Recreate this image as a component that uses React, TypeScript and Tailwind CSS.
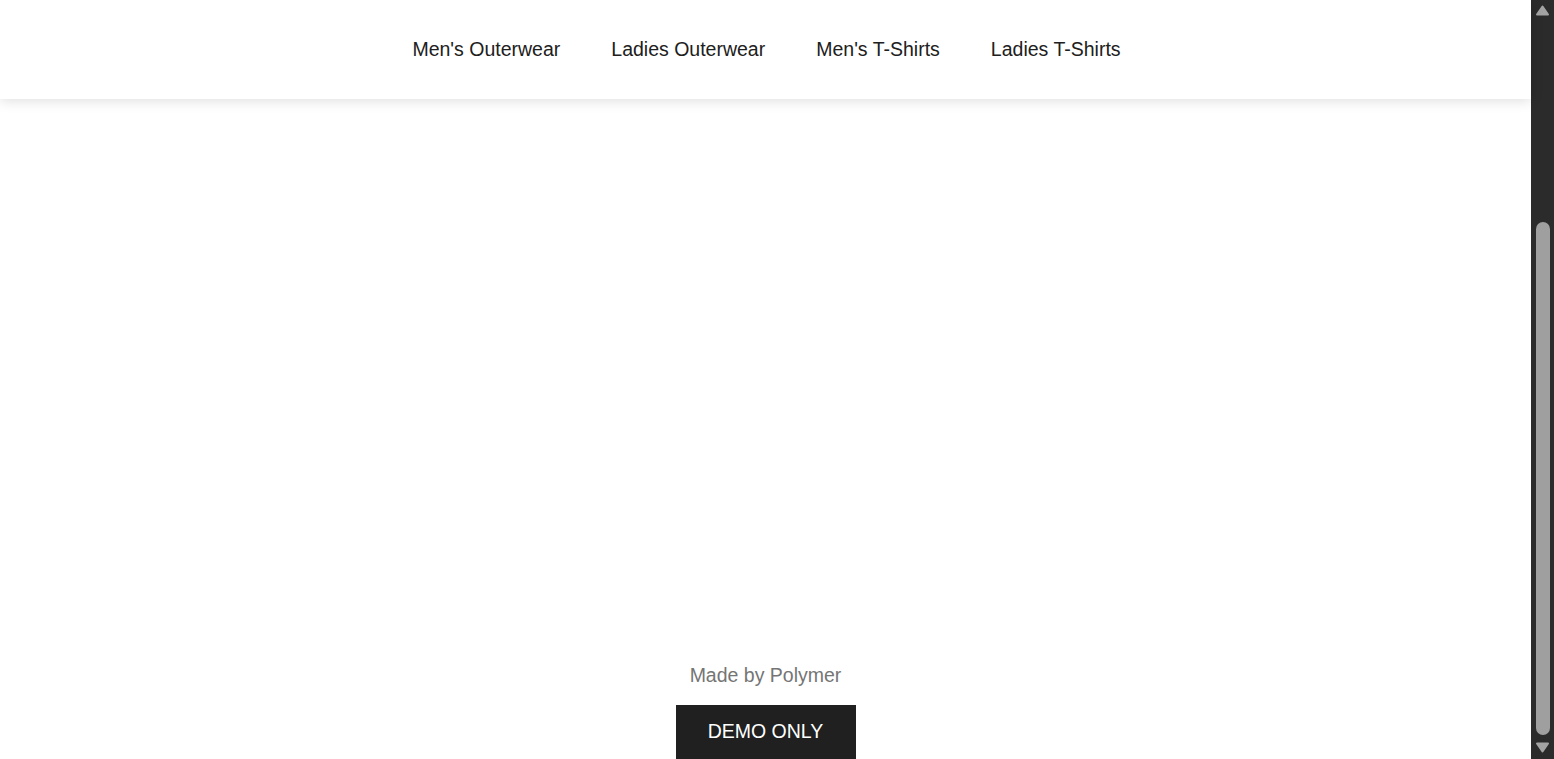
import React from "react";

const items = ["Men's Outerwear", "Ladies Outerwear", "Men's T-Shirts", "Ladies T-Shirts"];

function Arrow({ down }: { down?: boolean }) {
  return (
    <svg width="15" height="11" viewBox="0 0 15 11" className="block">
      <path
        d={down ? "M2 1.5 L13 1.5 L7.5 9.5 Z" : "M2 9.5 L13 9.5 L7.5 1.5 Z"}
        fill="#a3a3a3"
        stroke="#a3a3a3"
        strokeWidth="2"
        strokeLinejoin="round"
      />
    </svg>
  );
}

export default function App() {
  return (
    <div
      className="flex h-[759px] w-full overflow-hidden bg-white"
      style={{ fontFamily: '"Liberation Sans", Arial, sans-serif' }}
    >
      <div className="flex flex-1 flex-col">
        <header className="relative z-10 flex h-[99px] items-center justify-center bg-white shadow-[0_2px_12px_rgba(0,0,0,0.13)]">
          <nav className="flex gap-[51px] pb-[2px] pl-[2px] text-[19.5px] text-[#202020]">
            {items.map((t) => (
              <span key={t} className="leading-[24px]">
                {t}
              </span>
            ))}
          </nav>
        </header>
        <div className="flex-1" />
        <footer className="flex flex-col items-center">
          <p className="mb-[19px] text-[19.5px] leading-[22px] text-[#757575]">Made by Polymer</p>
          <button className="flex h-[54px] w-[180px] items-center justify-center bg-[#202020] text-[19.5px] text-white">
            DEMO ONLY
          </button>
        </footer>
      </div>
      <div className="flex w-[23px] flex-col items-center bg-[#2b2b2b] pt-[5px]">
        <Arrow />
        <div className="h-[206px]" />
        <div className="h-[513px] w-[14px] rounded-full bg-[#9f9f9f]" />
        <div className="h-[7px]" />
        <Arrow down />
      </div>
    </div>
  );
}
